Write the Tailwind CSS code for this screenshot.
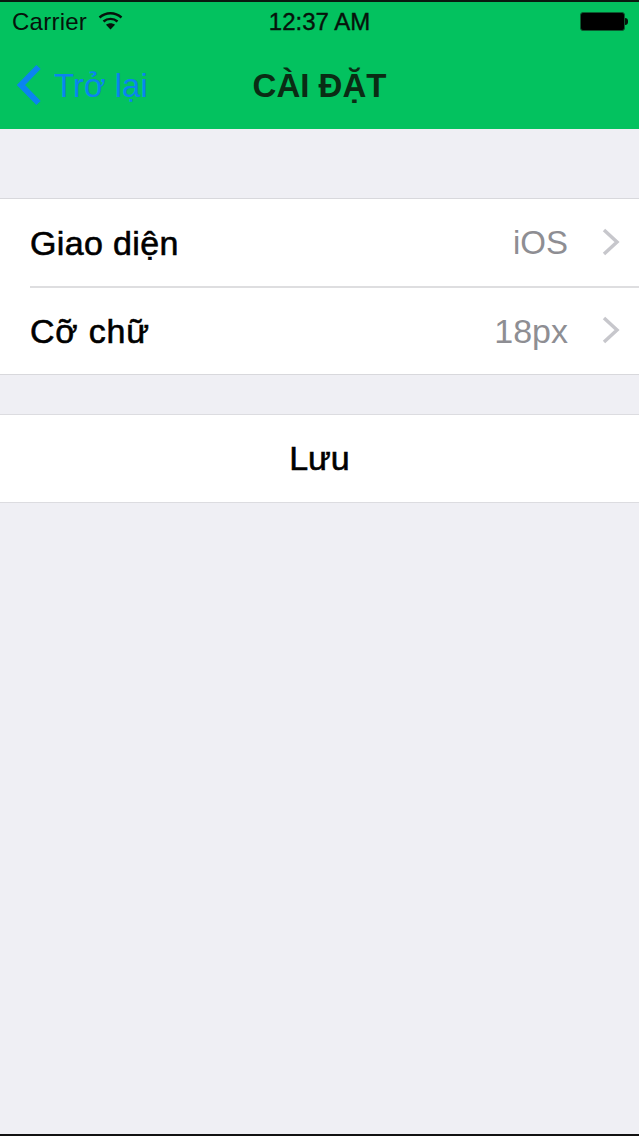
<!DOCTYPE html>
<html lang="vi">
<head>
    <meta charset="UTF-8">
    <title>Cài đặt</title>
    <script src="https://cdn.jsdelivr.net/npm/@tailwindcss/browser@4"></script>
</head>
<body class="bg-[#efeff4] font-['Liberation_Sans',Arial,sans-serif]">
    <div class="w-[639px] h-[1136px] flex flex-col overflow-hidden border-t-2 border-b-2 border-t-[#0a1a10] border-b-[#111]">
        <!-- header -->
        <header class="bg-[#03c25f] h-[127px] shrink-0 flex flex-col">
            <div class="h-[40px] px-3 grid grid-cols-3 items-center text-[24px] leading-none text-[#06130b]">
                <div class="flex items-center gap-[11px]">
                    <span class="tracking-[0.25px]">Carrier</span>
                    <svg width="25" height="19" viewBox="0 0 25 19" class="-mt-[3px]">
                        <path d="M1.5 6.5C8 .8 17 .8 23.5 6.5" fill="none" stroke="#06130b" stroke-width="2.4"/>
                        <path d="M5.5 10.5C9.5 7 15.5 7 19.5 10.5" fill="none" stroke="#06130b" stroke-width="2.4"/>
                        <path d="M12.5 18.5L8 13.8C10.5 11.8 14.5 11.8 17 13.8Z" fill="#06130b"/>
                    </svg>
                </div>
                <div class="text-center whitespace-nowrap [-webkit-text-stroke:0.4px_#06130b]">12:37 AM</div>
                <div class="flex justify-end items-center -mr-[1px] -mt-[2px]">
                    <div class="w-[45px] h-[19px] bg-black rounded-[3px] border border-[#0b5c30]"></div>
                    <div class="w-[3px] h-[7px] bg-[#06130b] rounded-r-sm"></div>
                </div>
            </div>
            <div class="relative flex-1 flex items-center justify-center -mt-[1px]">
                <a class="absolute left-[16px] top-[23px] flex items-center gap-[12px] text-[#0a84f0] text-[33px] leading-none">
                    <svg width="26" height="42" viewBox="0 0 26 42">
                        <path d="M22.5 3L5 21L22.5 39" fill="none" stroke="#0a84f0" stroke-width="6"/>
                    </svg>
                    <span>Trở lại</span>
                </a>
                <h1 class="text-[33px] leading-none font-bold text-[#0a2c14]">CÀI ĐẶT</h1>
            </div>
        </header>

        <main class="flex-1 flex flex-col text-black">
            <!-- settings rows -->
            <section class="mt-[69px] bg-white border-t border-b border-[#d8d8dc]">
                <div class="h-[87px] pl-[30px] pr-[19px] flex items-center">
                    <span class="text-[34px] leading-none tracking-[0.35px] [-webkit-text-stroke:0.6px_black]">Giao diện</span>
                    <span class="ml-auto text-[33px] leading-none text-[#8e8e93]">iOS</span>
                    <svg width="18" height="28" viewBox="0 0 18 28" class="ml-[34px] -mt-[2px]">
                        <path d="M2 2L15 14L2 26" fill="none" stroke="#c7c7cc" stroke-width="3.5"/>
                    </svg>
                </div>
                <div class="ml-[30px] h-[2px] bg-[#dedee0]"></div>
                <div class="h-[86px] pl-[30px] pr-[19px] flex items-center">
                    <span class="text-[34px] leading-none tracking-[0.8px] [-webkit-text-stroke:0.6px_black]">Cỡ chữ</span>
                    <span class="ml-auto text-[34px] leading-none text-[#8e8e93]">18px</span>
                    <svg width="18" height="28" viewBox="0 0 18 28" class="ml-[34px] -mt-[2px]">
                        <path d="M2 2L15 14L2 26" fill="none" stroke="#c7c7cc" stroke-width="3.5"/>
                    </svg>
                </div>
            </section>

            <!-- save button -->
            <section class="mt-[39px] h-[89px] bg-white border-t border-b border-[#dcdce0] flex items-center justify-center pb-[2px]">
                <span class="text-[34px] leading-none [-webkit-text-stroke:0.6px_black]">Lưu</span>
            </section>
        </main>
    </div>
</body>
</html>
